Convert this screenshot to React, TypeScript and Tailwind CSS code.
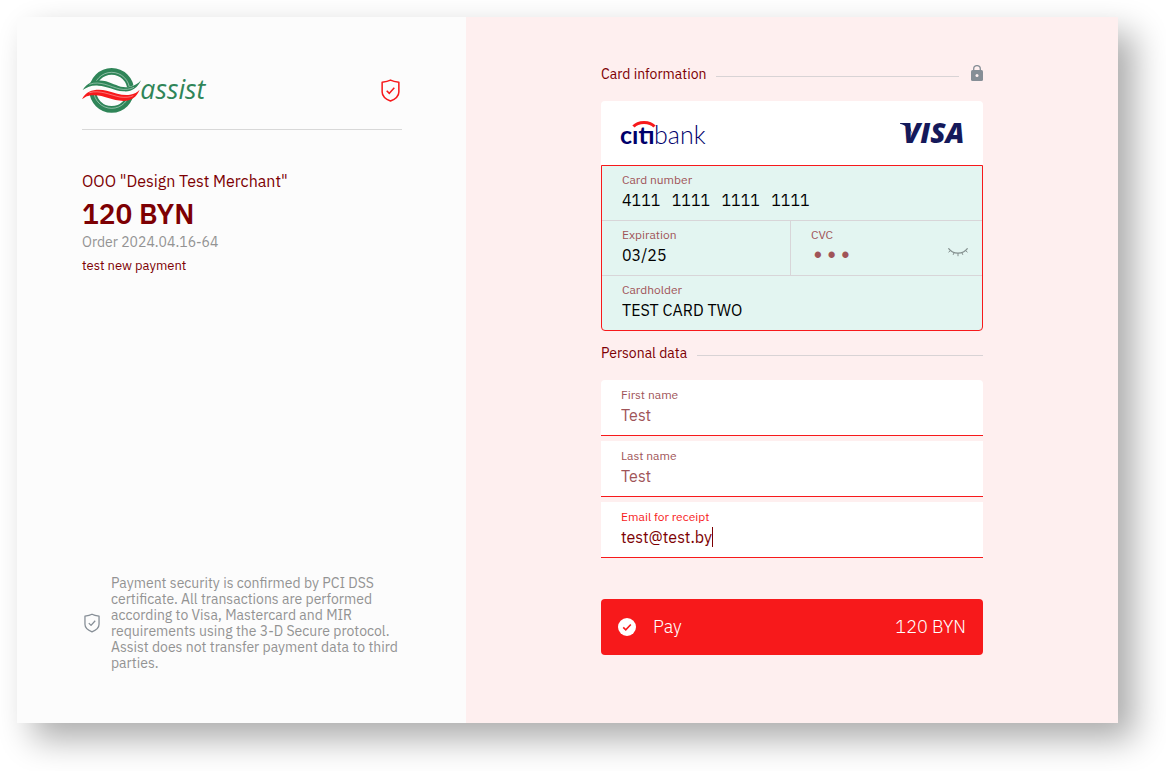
import { useState } from "react";
import type { InputHTMLAttributes, ReactNode } from "react";
import clsx from "clsx";

const AssistLogo = () => (
  <svg viewBox="36 36 384 141" className="h-[47px] w-32 overflow-visible" role="img" aria-label="assist">
    <circle cx="125" cy="106" r="57" fill="none" stroke="#2f8558" strokeWidth="20" />
    <circle cx="125" cy="106" r="54" fill="none" stroke="#fcfcfc" strokeWidth="1.4" />
    <path
      d="M30 108C55 78 90 80 118 90C148 102 170 106 214 78L214 106C200 130 170 130 140 124C105 114 60 100 34 136Z"
      fill="#fcfcfc"
    />
    <path
      d="M38 105C56 76 85 73 108 79C135 87 152 101 178 96C192 93 204 87 213 76C203 100 182 112 160 109C130 106 112 93 85 92C66 90 52 96 38 105Z"
      fill="#2f8558"
    />
    <path d="M58 88C90 76 120 95 150 102C165 105 180 103 192 97" fill="none" stroke="#fcfcfc" strokeWidth="1.3" />
    <path
      d="M36 133C50 102 85 101 110 107C138 115 160 123 180 119C193 117 202 112 209 104C200 126 185 137 160 138C128 137 100 121 75 121C55 120 46 125 36 133Z"
      fill="#f7191b"
    />
    <path d="M58 113C90 104 120 120 150 126C165 128 180 127 190 122" fill="none" stroke="#fcfcfc" strokeWidth="1.2" />
    <text
      x="211"
      y="131"
      fontSize="80"
      fontStyle="italic"
      fontWeight="500"
      fontFamily="'Open Sans', sans-serif"
      fill="#2f8558"
    >
      assist
    </text>
  </svg>
);

const CitibankLogo = () => (
  <svg viewBox="0 0 88 26" className="h-[26px] w-[88px] overflow-visible" role="img" aria-label="citibank">
    <path d="M12.5 6.5C17 1 29 1 33.500 6.500" fill="none" stroke="#f7191b" strokeWidth="3" />
    <text y="24" fontSize="25" fontFamily="Lato, sans-serif" fill="#00006b">
      <tspan x="-1" fontWeight="700">cıtı</tspan>
      <tspan x="33" fontWeight="300">bank</tspan>
    </text>
  </svg>
);

const VisaLogo = () => (
  <svg viewBox="0 0 64 22" className="h-[22px] w-16 overflow-visible" role="img" aria-label="VISA">
    <path d="M1 1H10L13 12C10 6 6 3 1 1.800Z" fill="#15195a" />
    <text
      x="4"
      y="21"
      fontSize="28"
      fontStyle="italic"
      fontWeight="800"
      fontFamily="'Open Sans', sans-serif"
      fill="#15195a"
    >
      VISA
    </text>
  </svg>
);

const ShieldIcon = ({ className }: { className?: string }) => (
  <svg
    viewBox="0 0 20 24"
    fill="none"
    stroke="currentColor"
    strokeWidth="1.6"
    strokeLinejoin="round"
    className={className}
    aria-hidden="true"
  >
    <path d="M10 1C7.500 2.300 4.500 2.900 1.200 3.300V13.500C1.200 18.300 5 21 10 23.100C15 21 18.800 18.300 18.800 13.500V3.300C15.500 2.900 12.500 2.300 10 1Z" />
    <path d="M6 12.200L8.800 15L14 9.200" />
  </svg>
);

const LockIcon = () => (
  <svg viewBox="0 0 12 16" className="h-4 w-3 shrink-0" aria-hidden="true">
    <path d="M2.700 6V3.900A3.300 3.300 0 0 1 9.300 3.900V6" fill="none" stroke="#868e96" strokeWidth="1.300" />
    <rect y="5" width="12" height="11" rx="1.500" fill="#868e96" />
    <circle cx="6" cy="10.500" r="1.500" fill="#feefef" />
  </svg>
);

const ClosedEyeIcon = () => (
  <svg viewBox="0 0 20 9" className="h-[9px] w-5" fill="none" stroke="#84908f" strokeLinecap="round" aria-hidden="true">
    <path d="M0.700 0.700C5 6.600 15 6.600 19.300 0.700" strokeWidth="1.200" />
    <path d="M2.300 2.700L0.800 4M6 4.800L5.300 6.500M10 5.500V7.800M14 4.800L14.700 6.500M17.700 2.700L19.200 4" strokeWidth="1" />
  </svg>
);

const SectionTitle = ({ children, icon }: { children: ReactNode; icon?: ReactNode }) => (
  <div className="flex h-5 items-center">
    <h2 className="pb-1 text-sm leading-4">{children}</h2>
    <span className="ml-2.5 h-px flex-1 bg-[#d8d3d5]" />
    {icon && <span className="mb-1.5 ml-3">{icon}</span>}
  </div>
);

interface FieldProps extends InputHTMLAttributes<HTMLInputElement> {
  id: string;
  label: string;
  labelClass?: string;
  inputSize?: string;
  compact?: boolean;
  caret?: boolean;
}

const Field = ({ id, label, labelClass, inputSize, compact, caret, className, ...rest }: FieldProps) => (
  <div className={clsx("flex min-w-0 flex-1 flex-col px-5", compact ? "pt-[7px]" : "pt-2")}>
    <label htmlFor={id} className={clsx("mb-0.5 text-xs leading-[13px]", labelClass ?? "text-[#a05458]")}>
      {label}
    </label>
    <div className="flex h-6 items-center">
      <input
        id={id}
        className={clsx(
          "h-6 min-w-0 bg-transparent p-0 outline-none",
          inputSize ?? "text-base",
          caret ? "field-sizing-content" : "w-full",
          className
        )}
        {...rest}
      />
      {caret && <span className="h-5 w-px bg-[#7d0003]" />}
    </div>
  </div>
);

const App = () => {
  const [card, setCard] = useState("4111   1111   1111   1111");
  const [expiration, setExpiration] = useState("03/25");
  const [cvc, setCvc] = useState("123");
  const [holder, setHolder] = useState("TEST CARD TWO");
  const [firstName, setFirstName] = useState("Test");
  const [lastName, setLastName] = useState("Test");
  const [email, setEmail] = useState("test@test.by");

  return (
    <div className="flex min-h-screen bg-white pt-[17px] pr-12 pb-12 pl-[17px] font-['IBM_Plex_Sans',Roboto,sans-serif] text-[#7d0003]">
      <main className="flex flex-1 shadow-[16px_16px_32px_rgba(0,0,0,0.33)]">
        {/* Order summary */}
        <section className="flex w-[449px] shrink-0 flex-col justify-between bg-[#fcfcfc] px-16 pt-[50px] pb-[52px]">
          <div className="pl-px">
            <div className="flex items-center justify-between border-b border-[#d8d8d8] pb-[15px]">
              <AssistLogo />
              <ShieldIcon className="mr-0.5 h-[23px] w-[19px] text-[#f7191b]" />
            </div>
            <p className="mt-[38px] text-base leading-[26px]">OOO "Design Test Merchant"</p>
            <h1 className="text-[28px] leading-10 font-semibold">120 BYN</h1>
            <p className="text-sm leading-4 text-[#939393]">Order 2024.04.16-64</p>
            <p className="mt-2 text-[13px] leading-4">test new payment</p>
          </div>
          <div className="flex items-center gap-[11px] pl-[3px] text-[#939393]">
            <ShieldIcon className="h-5 w-4 shrink-0 text-[#868e96]" />
            <p className="text-sm leading-4">
              Payment security is confirmed by PCI DSS certificate. All transactions are performed according to Visa,
              Mastercard and MIR requirements using the 3-D Secure protocol. Assist does not transfer payment data to
              third parties.
            </p>
          </div>
        </section>

        {/* Payment form */}
        <section className="flex flex-1 justify-center bg-[#feefef] pt-[49px]">
          <form className="w-[382px]" onSubmit={(e) => e.preventDefault()}>
            <SectionTitle icon={<LockIcon />}>Card information</SectionTitle>

            <div className="mt-[15px] flex h-16 items-center justify-between rounded-t bg-white px-5">
              <CitibankLogo />
              <VisaLogo />
            </div>
            <div className="rounded-b border border-[#f7191b] bg-[#e3f5f1]">
              <div className="flex h-[55px] border-b border-[#d8d5d8]">
                <Field
                  id="card"
                  label="Card number"
                  compact
                  className="text-black"
                  value={card}
                  onChange={(e) => setCard(e.target.value)}
                />
              </div>
              <div className="grid h-[55px] grid-cols-[189fr_191fr] border-b border-[#d8d5d8]">
                <div className="flex border-r border-[#d8d5d8]">
                  <Field
                    id="expiration"
                    label="Expiration"
                    compact
                    className="text-black"
                    value={expiration}
                    onChange={(e) => setExpiration(e.target.value)}
                  />
                </div>
                <div className="flex">
                  <Field
                    id="cvc"
                    label="CVC"
                    type="password"
                    compact
                    inputSize="text-[23px]"
                    className="pt-1 font-['Liberation_Mono',monospace] text-[#a05458]"
                    value={cvc}
                    onChange={(e) => setCvc(e.target.value)}
                  />
                  <button type="button" aria-label="Show CVC" className="mt-2 mr-3.5 self-center py-2">
                    <ClosedEyeIcon />
                  </button>
                </div>
              </div>
              <div className="flex h-[54px]">
                <Field
                  id="holder"
                  label="Cardholder"
                  compact
                  className="text-black"
                  value={holder}
                  onChange={(e) => setHolder(e.target.value)}
                />
              </div>
            </div>

            <div className="mt-3.5">
              <SectionTitle>Personal data</SectionTitle>
            </div>

            <div className="mt-[15px] flex flex-col gap-[5px]">
              <div className="flex h-14 rounded-t border-b border-[#f7191b] bg-white">
                <Field
                  id="first-name"
                  label="First name"
                  className="text-[#a05458]"
                  value={firstName}
                  onChange={(e) => setFirstName(e.target.value)}
                />
              </div>
              <div className="flex h-14 border-b border-[#f7191b] bg-white">
                <Field
                  id="last-name"
                  label="Last name"
                  className="text-[#a05458]"
                  value={lastName}
                  onChange={(e) => setLastName(e.target.value)}
                />
              </div>
              <div className="flex h-14 border-b border-[#f7191b] bg-white">
                <Field
                  id="email"
                  label="Email for receipt"
                  labelClass="text-[#f7191b]"
                  type="text"
                  inputMode="email"
                  caret
                  value={email}
                  onChange={(e) => setEmail(e.target.value)}
                />
              </div>
            </div>

            <button
              type="submit"
              className="mt-[41px] flex h-14 w-full items-center rounded bg-[#f7191b] px-[17px] text-lg font-light text-white"
            >
              <svg viewBox="0 0 18 18" className="h-[18px] w-[18px]" aria-hidden="true">
                <circle cx="9" cy="9" r="9" fill="white" />
                <path d="M5.200 9.300L7.800 11.800L12.800 6.500" fill="none" stroke="#f7191b" strokeWidth="1.600" />
              </svg>
              <span className="ml-[17px]">Pay</span>
              <span className="ml-auto">120 BYN</span>
            </button>
          </form>
        </section>
      </main>
    </div>
  );
};

export default App;
